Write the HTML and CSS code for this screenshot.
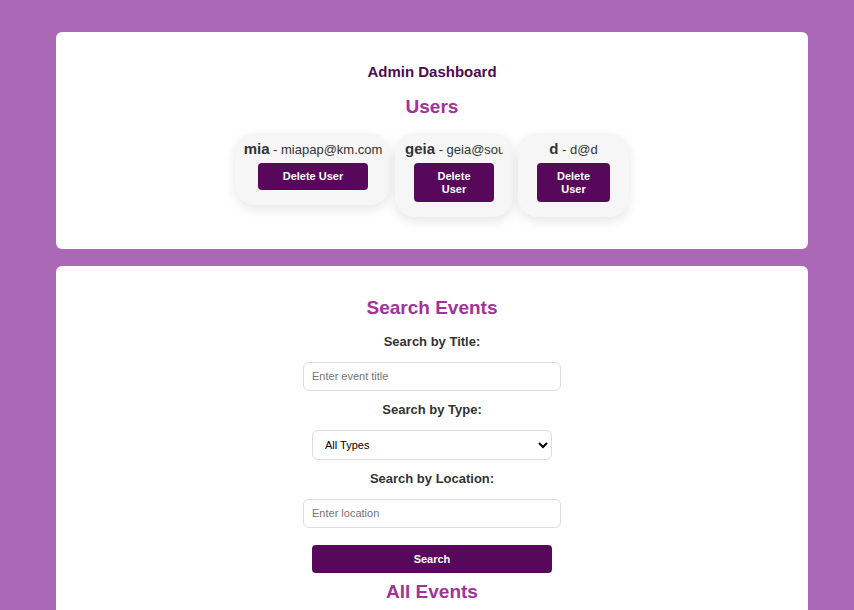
FILE: index.html
```html
<!DOCTYPE html>
<html lang="en">
<head>
<meta charset="utf-8">
<title>Admin Dashboard</title>
<link rel="stylesheet" href="styles.css">
</head>
<body>
<div class="container">
  <section class="panel panel-users">
    <h1 class="title">Admin Dashboard</h1>
    <h2 class="section-title">Users</h2>
    <div class="user-list">
      <div class="user-card user-card-wide">
        <div class="user-info"><strong>mia</strong> - miapap@km.com</div>
        <button class="btn-delete">Delete User</button>
      </div>
      <div class="user-card user-card-mid">
        <div class="user-info"><strong>geia</strong> - geia@southmail.com</div>
        <button class="btn-delete">Delete User</button>
      </div>
      <div class="user-card user-card-narrow">
        <div class="user-info"><strong>d</strong> - d@d</div>
        <button class="btn-delete">Delete User</button>
      </div>
    </div>
  </section>
  <section class="panel panel-search">
    <h2 class="section-title">Search Events</h2>
    <form class="search-form">
      <label class="field-label" for="title">Search by Title:</label>
      <input class="field-input" id="title" type="text" placeholder="Enter event title">
      <label class="field-label" for="type">Search by Type:</label>
      <select class="field-select" id="type">
        <option>All Types</option>
      </select>
      <label class="field-label" for="loc">Search by Location:</label>
      <input class="field-input" id="loc" type="text" placeholder="Enter location">
      <button class="btn-search" type="button">Search</button>
    </form>
    <h2 class="section-title all-events">All Events</h2>
  </section>
</div>
</body>
</html>
```
FILE: styles.css
```css
* { box-sizing: content-box; }
html, body {
  margin: 0;
  padding: 0;
  background: #ab68b6;
  font-family: "Liberation Sans", Arial, sans-serif;
  color: #333;
}
.container {
  width: 752px;
  margin: 0 0 0 56px;
  padding-top: 32px;
  display: flex;
  flex-direction: column;
  gap: 17px;
}
.panel {
  background: #fff;
  border-radius: 6px;
  padding: 30px 20px 32px;
  display: flex;
  flex-direction: column;
  align-items: center;
}
.title {
  margin: 0;
  font-size: 15px;
  line-height: 20px;
  font-weight: bold;
  color: #4f0a52;
}
.section-title {
  margin: 13px 0 0;
  font-size: 19px;
  line-height: 23px;
  font-weight: bold;
  color: #a3319b;
}
.panel-search .section-title { margin-top: 0; }
.panel-search .all-events { margin-top: 7px; }
.user-list {
  margin-top: 15px;
  display: flex;
  align-items: flex-start;
  justify-content: center;
  gap: 5px;
}
.user-card {
  background: #f6f6f6;
  border-radius: 20px;
  padding: 8px 10px 10px;
  box-shadow: 0 4px 12px rgba(0, 0, 0, 0.1);
  text-align: center;
  box-sizing: border-box;
  display: flex;
  flex-direction: column;
  align-items: center;
}
.user-card-wide { width: 155px; padding-left: 8px; padding-right: 7px; }
.user-card-mid { width: 118px; }
.user-card-narrow { width: 111px; }
.user-info {
  font-size: 13px;
  line-height: 16px;
  white-space: nowrap;
  align-self: stretch;
  text-align: center;
  color: #333;
}
.user-info strong {
  font-size: 15px;
  color: #333;
}
.user-card-mid .user-info { text-align: left; overflow: hidden; }
.btn-delete {
  margin: 5px 9px 5px;
  padding: 7px 25px;
  border: none;
  border-radius: 4px;
  background: #57085a;
  color: #fff;
  font-family: "Liberation Sans", Arial, sans-serif;
  font-size: 11px;
  font-weight: bold;
  line-height: 12.5px;
  box-sizing: border-box;
}
.user-card-mid .btn-delete, .user-card-narrow .btn-delete {
  width: calc(100% - 18px);
  padding: 7px 10px;
}
.search-form {
  display: flex;
  flex-direction: column;
  align-items: center;
}
.field-label {
  margin-top: 15px;
  font-size: 13px;
  line-height: 16px;
  font-weight: bold;
  color: #333;
}
.field-input, .field-select {
  margin-top: 12px;
  font-family: "Liberation Sans", Arial, sans-serif;
  font-size: 11px;
  border: 1px solid #ddd;
  border-radius: 6px;
  background: #fff;
}
.field-input {
  width: 240px;
  padding: 7px 8px;
  line-height: 13px;
  color: #333;
}
.field-input::placeholder { color: #757575; }
.field-input + .field-label, .field-select + .field-label { margin-top: 11px; }
.field-select {
  width: 240px;
  height: 30px;
  box-sizing: border-box;
  padding: 0 8px;
  color: #000;
}
.btn-search {
  margin-top: 17px;
  width: 240px;
  height: 28px;
  box-sizing: border-box;
  border: none;
  border-radius: 4px;
  background: #57085a;
  color: #fff;
  font-family: "Liberation Sans", Arial, sans-serif;
  font-size: 11px;
  font-weight: bold;
}
```
